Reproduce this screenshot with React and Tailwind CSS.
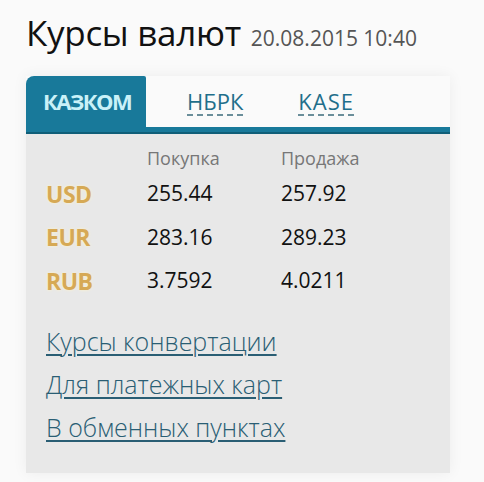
export default function App() {
  const rows = [
    ["USD", "255.44", "257.92"],
    ["EUR", "283.16", "289.23"],
    ["RUB", "3.7592", "4.0211"],
  ];
  const links = ["Курсы конвертации", "Для платежных карт", "В обменных пунктах"];
  return (
    <div className="w-[484px] h-[482px] bg-[#fafafa] pl-[26px] pt-[12px] overflow-hidden" style={{ fontFamily: '"Open Sans", "Noto Sans", sans-serif' }}>
      <div className="flex items-baseline gap-[10px] h-[46px]">
        <span className="text-[35px] leading-[42px] text-[#111] tracking-[-0.3px]">Курсы валют</span>
        <span className="text-[21px] text-[#555]">20.08.2015 10:40</span>
      </div>
      <div className="w-[424px] mt-[18px] shadow-[0_0_14px_rgba(0,0,0,0.06)]">
        <div className="flex items-end h-[51px]">
          <div className="w-[120px] h-[51px] bg-[#18799a] rounded-tl-[8px] rounded-tr-[2px] flex items-center pl-[17px]">
            <span className="text-[22px] font-bold text-[#c9f1f8] tracking-[-1.5px]">КАЗКОМ</span>
          </div>
          <div className="flex items-center h-[51px] pl-[41px]">
            <span className="text-[22px] text-[#1f6f8b] border-b-2 border-dashed border-[#6a8e9a] leading-[26px]">НБРК</span>
          </div>
          <div className="flex items-center h-[51px] pl-[55px]">
            <span className="text-[22px] text-[#1f6f8b] border-b-2 border-dashed border-[#6a8e9a] leading-[26px] tracking-[1px]">KASE</span>
          </div>
        </div>
        <div className="h-[7px] bg-[#18799a] border-b-2 border-[#0f5e78]"></div>
        <div className="bg-[#e8e8e8] h-[339px] pt-[10px]">
          <div className="flex text-[18px] text-[#777] h-[28px] items-center">
            <span className="w-[121px]"></span>
            <span className="w-[134px]">Покупка</span>
            <span>Продажа</span>
          </div>
          {rows.map(([c, b, s]) => (
            <div key={c} className="flex items-center h-[43.5px] text-[21px] text-[#111]">
              <span className="w-[121px] pl-[20px] font-bold text-[23px] text-[#d6a955] tracking-[-0.5px]" style={{ textShadow: "0 0 3px #fff3c8" }}>{c}</span>
              <span className="w-[134px]">{b}</span>
              <span>{s}</span>
            </div>
          ))}
          <div className="flex flex-col pl-[20px] pt-[22px] gap-[10px]">
            {links.map((l) => (
              <a key={l} href="#" className="text-[25px] leading-[33px] text-[#2a5e74] underline decoration-[2px] underline-offset-[3px] font-light self-start">{l}</a>
            ))}
          </div>
        </div>
      </div>
    </div>
  );
}
